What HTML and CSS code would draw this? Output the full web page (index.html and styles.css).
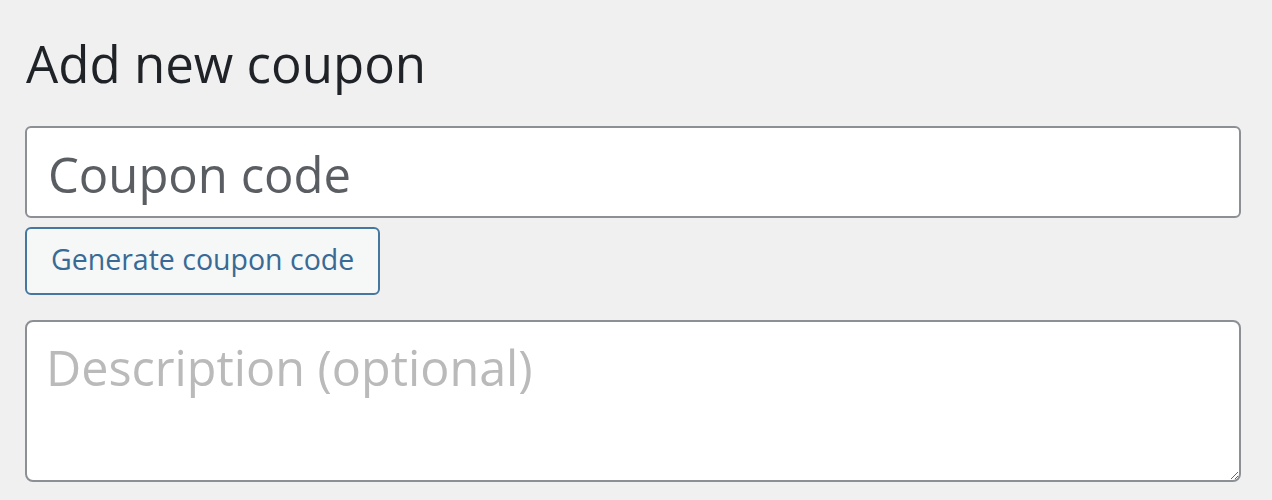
FILE: index.html
```html
<!DOCTYPE html>
<html lang="en">
<head>
<meta charset="utf-8">
<title>Add new coupon</title>
<link rel="stylesheet" href="styles.css">
</head>
<body>
<main class="page">
  <h1 class="title">Add new coupon</h1>
  <form class="coupon-form">
    <input class="code-input" type="text" placeholder="Coupon code" value="Coupon code">
    <button type="button" class="gen-btn">Generate coupon code</button>
    <textarea class="desc" placeholder="Description (optional)"></textarea>
  </form>
</main>
</body>
</html>
```

FILE: styles.css
```css
html, body {
  margin: 0;
  padding: 0;
  background: #f0f0f1;
}
body {
  font-family: "Open Sans", "Noto Sans", "Liberation Sans", sans-serif;
  color: #1d2327;
}
.page {
  padding: 0 31px 0 25px;
}
.title {
  margin: 0;
  padding: 30px 0 0 1px;
  font-size: 51px;
  font-weight: 400;
  line-height: 66px;
  color: #1f2226;
}
.coupon-form {
  display: flex;
  flex-direction: column;
  align-items: flex-start;
  margin-top: 30px;
}
.code-input {
  box-sizing: border-box;
  width: 100%;
  height: 92px;
  border: 2px solid #8c8f94;
  border-radius: 6px;
  background: #fff;
  padding: 4px 21px 0;
  font-family: inherit;
  font-size: 49px;
  color: #5a5d61;
  outline: none;
}
.gen-btn {
  box-sizing: border-box;
  margin-top: 9px;
  height: 68px;
  padding: 0 24px 4px;
  border: 2px solid #46779f;
  border-radius: 6px;
  background: #f6f7f7;
  font-family: inherit;
  font-size: 28.5px;
  color: #386a95;
  cursor: pointer;
}
.desc {
  box-sizing: border-box;
  margin-top: 25px;
  width: 100%;
  height: 162px;
  border: 2px solid #8c8f94;
  border-radius: 8px;
  background: #fff;
  padding: 12px 19px;
  font-family: inherit;
  font-size: 48.5px;
  line-height: 66px;
  color: #50575e;
  resize: vertical;
  outline: none;
}
.desc::placeholder {
  color: #bababa;
}
```
